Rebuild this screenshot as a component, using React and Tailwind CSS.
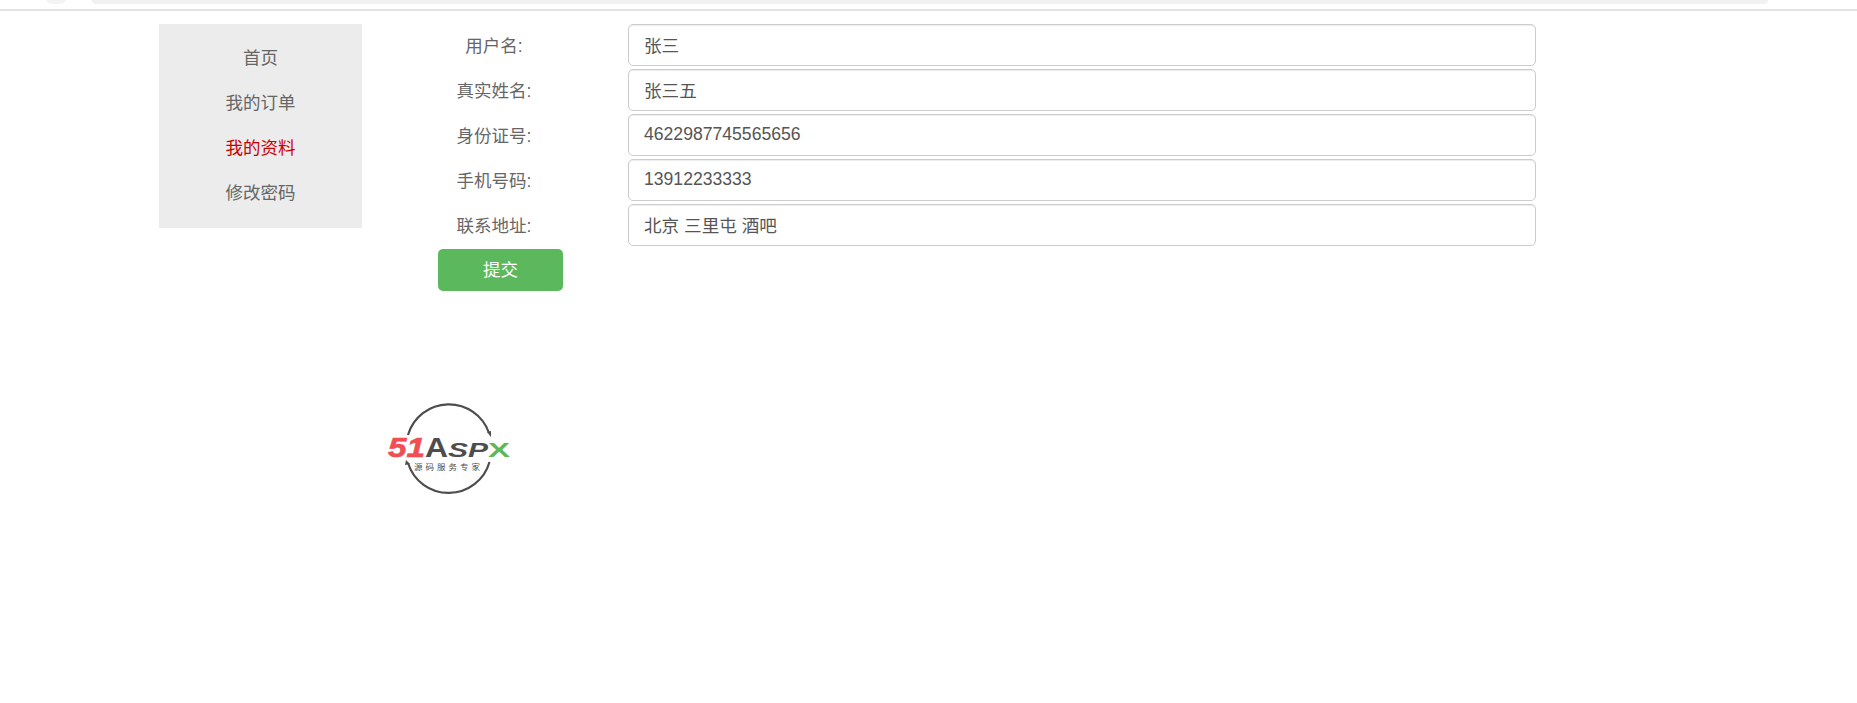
const menu = [
  { label: "首页" },
  { label: "我的订单" },
  { label: "我的资料", active: true },
  { label: "修改密码" },
]

const fields = [
  { label: "用户名:", value: "张三" },
  { label: "真实姓名:", value: "张三五" },
  { label: "身份证号:", value: "4622987745565656" },
  { label: "手机号码:", value: "13912233333" },
  { label: "联系地址:", value: "北京 三里屯 酒吧" },
]

function Logo() {
  const latin = "'Liberation Sans', sans-serif"
  return (
    <svg width="130" height="96" viewBox="0 0 130 96" className="block">
      <path d="M22 33 A42.500 42.500 0 0 1 103 31" fill="none" stroke="#4d4d4d" strokeWidth="2.200" />
      <path d="M103.500 60 A42.500 42.500 0 0 1 22 61" fill="none" stroke="#4d4d4d" strokeWidth="2.200" />
      <path d="M101 30 L105 29 L105 35 Z" fill="#4d4d4d" />
      <path d="M24 62 L19 63 L20 58 Z" fill="#4d4d4d" />
      <text x="2" y="55" fontFamily={latin} fontSize="28" fontWeight="700" fontStyle="italic" fill="#f04e53" stroke="#f04e53" strokeWidth="0.600" textLength="37" lengthAdjust="spacingAndGlyphs">51</text>
      <text x="39" y="55" fontFamily={latin} fontSize="28" fontWeight="700" fill="#4d4d4d" textLength="23" lengthAdjust="spacingAndGlyphs">A</text>
      <text x="62" y="55" fontFamily={latin} fontSize="19.500" fontWeight="700" fontStyle="italic" fill="#4d4d4d" textLength="40" lengthAdjust="spacingAndGlyphs">SP</text>
      <text x="102" y="55" fontFamily={latin} fontSize="19.500" fontWeight="700" fill="#5cb85c" textLength="22" lengthAdjust="spacingAndGlyphs">X</text>
      <text x="62.500" y="67.500" textAnchor="middle" fontFamily="'Noto Sans CJK SC', sans-serif" fontSize="8.500" fill="#4d4d4d" letterSpacing="3">源码服务专家</text>
    </svg>
  )
}

export default function App() {
  return (
    <div className="min-h-[703px] bg-white font-['Liberation_Sans','Noto_Sans_CJK_SC',sans-serif] text-[17.5px] text-[#555]">
      {/* browser bar remnant */}
      <div className="relative h-[11px] border-b-2 border-[#e4e4e4]">
        <div className="absolute left-[92px] top-0 h-[4px] w-[1676px] rounded-b-[8px] bg-[#f1f1f1]" />
        <div className="absolute left-[46px] top-[-8px] h-[12px] w-[20px] rounded-full bg-[#f3f3f3]" />
      </div>

      <div className="flex pl-[159px] pt-[13px]">
        <ul className="h-[204px] w-[203px] bg-[#ececec] pt-[12px] text-center">
          {menu.map((item) => (
            <li key={item.label} className={`h-[45px] leading-[45px] ${item.active ? "text-[#c00]" : "text-[#666]"}`}>
              {item.label}
            </li>
          ))}
        </ul>

        <div className="ml-[24px] flex-1">
          <form className="flex flex-col pl-[33px]">
            {fields.map((field) => (
              <div key={field.label} className="flex h-[45px] items-start">
                <label className="h-[44px] w-[209px] pr-[59px] text-center leading-[44px] text-[#666]">{field.label}</label>
                <input
                  readOnly
                  value={field.value}
                  className="h-[42px] w-[908px] rounded-[5px] border border-[#ccc] bg-white px-[15px] pb-[2px] text-[17.6px] text-[#555] shadow-[inset_0_1px_1px_rgba(0,0,0,0.075)] outline-none"
                />
              </div>
            ))}
            <button
              type="button"
              className="ml-[19px] h-[42px] w-[125px] rounded-[5px] bg-[#5cb85c] text-white"
            >
              提交
            </button>
          </form>
          <div className="mt-[111px]">
            <Logo />
          </div>
        </div>
      </div>
    </div>
  )
}
